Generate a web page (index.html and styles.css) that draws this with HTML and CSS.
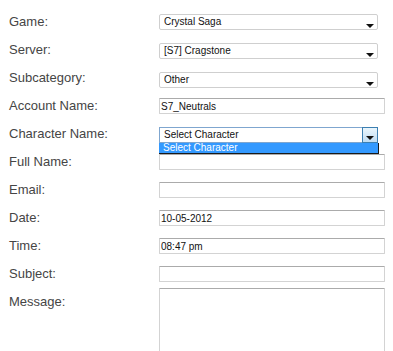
FILE: index.html
```html
<!DOCTYPE html>
<html lang="en">
<head>
    <meta charset="UTF-8">
    <meta name="viewport" content="width=device-width, initial-scale=1.0">
    <title>Submit Ticket</title>
    <link rel="stylesheet" href="styles.css">
</head>
<body>
    <form class="ticket-form">
        <div class="row">
            <label class="row-label">Game:</label>
            <div class="select-wrap">
                <select class="field-select"><option>Crystal Saga</option></select>
                <span class="select-arrow"></span>
            </div>
        </div>
        <div class="row">
            <label class="row-label">Server:</label>
            <div class="select-wrap nudge-1">
                <select class="field-select"><option>[S7] Cragstone</option></select>
                <span class="select-arrow"></span>
            </div>
        </div>
        <div class="row">
            <label class="row-label">Subcategory:</label>
            <div class="select-wrap nudge-2">
                <select class="field-select"><option>Other</option></select>
                <span class="select-arrow"></span>
            </div>
        </div>
        <div class="row">
            <label class="row-label">Account Name:</label>
            <input class="field-input" type="text" value="S7_Neutrals">
        </div>
        <div class="row row-open">
            <label class="row-label">Character Name:</label>
            <div class="select-wrap nudge-1 is-open">
                <select class="field-select"><option>Select Character</option></select>
                <span class="select-button"><span class="select-arrow"></span></span>
                <div class="select-list">
                    <div class="select-option">Select Character</div>
                </div>
            </div>
        </div>
        <div class="row">
            <label class="row-label">Full Name:</label>
            <input class="field-input nudge-up" type="text">
        </div>
        <div class="row">
            <label class="row-label">Email:</label>
            <input class="field-input" type="text">
        </div>
        <div class="row">
            <label class="row-label">Date:</label>
            <input class="field-input nudge-up" type="text" value="10-05-2012">
        </div>
        <div class="row">
            <label class="row-label">Time:</label>
            <input class="field-input" type="text" value="08:47 pm">
        </div>
        <div class="row">
            <label class="row-label">Subject:</label>
            <input class="field-input" type="text">
        </div>
        <div class="row row-message">
            <label class="row-label">Message:</label>
            <textarea class="field-textarea" rows="8"></textarea>
        </div>
    </form>
</body>
</html>
```

FILE: styles.css
```css
* {
    box-sizing: border-box;
}

body {
    margin: 0;
    background: #fff;
    font-family: "Liberation Sans", Arial, sans-serif;
    overflow: hidden;
}

.ticket-form {
    padding: 14px 0 0 9px;
}

.row {
    display: flex;
    align-items: flex-start;
    height: 28px;
}

.row-open {
    position: relative;
    z-index: 2;
}

.row-message {
    height: auto;
}

.row-label {
    flex-shrink: 0;
    width: 150px;
    font-size: 13px;
    line-height: 16px;
    color: #454545;
}

/* selects */
.select-wrap {
    position: relative;
    width: 219px;
    height: 16px;
}

.nudge-1 { margin-top: 1px; }
.nudge-2 { margin-top: 2px; }
.nudge-up { margin-top: -1px; }

.field-select {
    -webkit-appearance: none;
    appearance: none;
    display: block;
    width: 100%;
    height: 16px;
    margin: 0;
    padding: 0 4px;
    border: 1px solid #cfcfcf;
    border-radius: 2px;
    background: #fff;
    color: #111;
    font: 10px/14px "Liberation Sans", Arial, sans-serif;
    outline: none;
}

.select-arrow {
    position: absolute;
    right: 4px;
    top: 10px;
    width: 0;
    height: 0;
    border-left: 4px solid transparent;
    border-right: 4px solid transparent;
    border-top: 4px solid #111;
}

.is-open .field-select {
    border-color: #7fa6cf;
    border-radius: 0;
}

.select-button {
    position: absolute;
    top: 0;
    right: 0;
    width: 16px;
    height: 16px;
    border: 1px solid #3c7fb1;
    background: linear-gradient(#eaf6fd, #c0dcf2);
}

.select-button .select-arrow {
    right: 3px;
    top: 8px;
}

.select-list {
    position: absolute;
    top: 16px;
    left: 0;
    width: 220px;
    height: 11px;
    background: #3399ff;
    border-right: 1px solid #1a1a1a;
    border-bottom: 1px solid #1a1a1a;
}

.select-option {
    padding-left: 4px;
    color: #fff;
    font-size: 10px;
    line-height: 10px;
}

/* text fields */
.field-input {
    display: block;
    width: 226px;
    height: 16px;
    margin: 0;
    padding: 0 1px;
    border: 1px solid #d3d3d3;
    border-top-color: #ababab;
    border-radius: 1px;
    background: #fff;
    color: #111;
    font: 10px/14px "Liberation Sans", Arial, sans-serif;
    outline: none;
}

.field-textarea {
    display: block;
    flex-shrink: 0;
    width: 226px;
    height: 90px;
    min-height: 90px;
    margin: -6px 0 0;
    padding: 1px;
    border: 1px solid #d3d3d3;
    border-top-color: #ababab;
    border-radius: 1px;
    resize: none;
    font: 10px "Liberation Sans", Arial, sans-serif;
}
```
